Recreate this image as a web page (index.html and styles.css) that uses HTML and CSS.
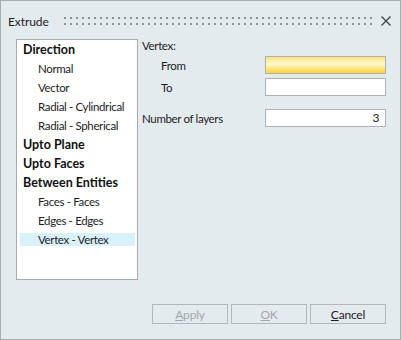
FILE: index.html
```html
<!DOCTYPE html>
<html>
<head>
<meta charset="utf-8">
<link rel="stylesheet" href="styles.css">
</head>
<body>
<div class="window">
  <div class="titlebar">
    <span class="title">Extrude</span>
    <span class="grip"></span>
    <svg class="close" width="10" height="10" viewBox="0 0 10 10"><path d="M0.5 0.5 L9.5 9.5 M9.5 0.5 L0.5 9.5" stroke="#3a3d40" stroke-width="1.2" fill="none"/></svg>
  </div>
  <div class="main">
    <ul class="list">
      <li class="item head">Direction</li>
      <li class="item sub">Normal</li>
      <li class="item sub">Vector</li>
      <li class="item sub">Radial - Cylindrical</li>
      <li class="item sub">Radial - Spherical</li>
      <li class="item head">Upto Plane</li>
      <li class="item head">Upto Faces</li>
      <li class="item head">Between Entities</li>
      <li class="item sub">Faces - Faces</li>
      <li class="item sub">Edges - Edges</li>
      <li class="item sub selected">Vertex - Vertex</li>
    </ul>
    <div class="panel">
      <div class="group-label">Vertex:</div>
      <div class="row">
        <span class="label indent">From</span>
        <div class="field active"></div>
      </div>
      <div class="row">
        <span class="label indent">To</span>
        <div class="field"></div>
      </div>
      <div class="row spaced">
        <span class="label">Number of layers</span>
        <div class="field num">3</div>
      </div>
    </div>
  </div>
  <div class="footer">
    <button class="btn" disabled><u>A</u>pply</button>
    <button class="btn" disabled><u>O</u>K</button>
    <button class="btn"><u>C</u>ancel</button>
  </div>
</div>
</body>
</html>
```
FILE: styles.css
```css
html, body {
  margin: 0;
  padding: 0;
}
body {
  font-family: Lato, "Liberation Sans", sans-serif;
  font-size: 11.5px;
  letter-spacing: -0.35px;
  color: #1c1c24;
}
.window {
  box-sizing: border-box;
  width: 401px;
  height: 340px;
  border: 1px solid #a9adb1;
  background: #e4ebef;
  display: flex;
  flex-direction: column;
}
.titlebar {
  height: 38px;
  display: flex;
  align-items: center;
  padding: 0 8px 0 7px;
  box-sizing: border-box;
}
.title {
  font-size: 12px;
  letter-spacing: -0.1px;
  color: #1e1a22;
  width: 56px;
  position: relative;
  top: 1px;
}
.grip {
  width: 308px;
  height: 8px;
  background-image: conic-gradient(from 0deg at 2px 2px, transparent 75%, #8d9296 0);
  background-size: 6px 6px;
  position: relative;
  top: 1px;
}
.close {
  margin-left: 9px;
  position: relative;
  top: 1px;
}
.main {
  display: flex;
  padding: 0 14px 0 15px;
  height: 241px;
}
.list {
  box-sizing: border-box;
  width: 122px;
  height: 241px;
  margin: 0;
  padding: 3px 2px 0 3px;
  list-style: none;
  background: #ffffff;
  border: 1px solid #a8acb0;
  display: flex;
  flex-direction: column;
  gap: 6px;
}
.item {
  height: 13px;
  line-height: 13px;
  white-space: nowrap;
}
.head {
  font-weight: bold;
  font-size: 12.5px;
  letter-spacing: 0;
  padding-left: 3px;
  color: #101010;
}
.sub {
  padding-left: 18px;
}
.selected {
  background: #d9f1fb;
}
.panel {
  flex: 1;
  margin-left: 4px;
  display: flex;
  flex-direction: column;
}
.group-label {
  height: 14px;
  line-height: 14px;
  margin-bottom: 3px;
}
.row {
  display: flex;
  align-items: center;
  justify-content: space-between;
  height: 18px;
  margin-bottom: 4px;
}
.row.spaced {
  margin-top: 9px;
}
.indent {
  padding-left: 19px;
}
.field {
  box-sizing: border-box;
  width: 121px;
  height: 18px;
  border: 1px solid #adb1b5;
  background: #ffffff;
}
.field.active {
  background: linear-gradient(to bottom, #ffe27a 0%, #fff3b8 30%, #fff6cc 45%, #ffe88a 70%, #ffd52e 100%);
}
.field.num {
  text-align: right;
  padding-right: 6px;
  line-height: 16px;
  font-size: 12px;
}
.footer {
  flex: 1;
  display: flex;
  justify-content: flex-end;
  align-items: flex-end;
  gap: 3px;
  padding: 0 14px 15px 0;
}
.btn {
  box-sizing: border-box;
  width: 76px;
  height: 20px;
  border: 1px solid #b3b7bb;
  background: #e4ebef;
  font-family: inherit;
  font-size: 12px;
  letter-spacing: -0.2px;
  color: #1c1c24;
  padding: 0;
  border-radius: 0;
}
.btn:disabled {
  color: #a3a6aa;
}
```
